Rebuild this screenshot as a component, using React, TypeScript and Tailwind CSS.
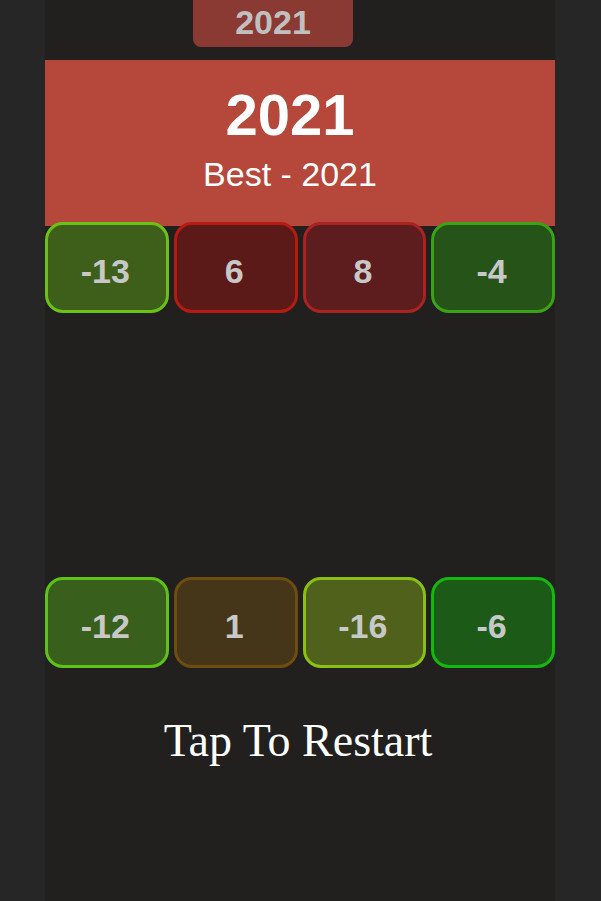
import React from "react";

type Tile = { value: string; bg: string; border: string };

const topRow: Tile[] = [
  { value: "-13", bg: "bg-[#3d5f19]", border: "border-[#6ac313]" },
  { value: "6", bg: "bg-[#5b1a18]", border: "border-[#b81a12]" },
  { value: "8", bg: "bg-[#5d1c1d]", border: "border-[#ab2222]" },
  { value: "-4", bg: "bg-[#255318]", border: "border-[#3aa215]" },
];

const bottomRow: Tile[] = [
  { value: "-12", bg: "bg-[#385f1b]", border: "border-[#5fc216]" },
  { value: "1", bg: "bg-[#453619]", border: "border-[#6f4d0f]" },
  { value: "-16", bg: "bg-[#4f611b]", border: "border-[#8abf13]" },
  { value: "-6", bg: "bg-[#1b5b17]", border: "border-[#15b80e]" },
];

const TileRow: React.FC<{ tiles: Tile[]; className?: string }> = ({ tiles, className }) => (
  <div className={`grid grid-cols-4 gap-[5px] ${className ?? ""}`}>
    {tiles.map((t, i) => (
      <div
        key={i}
        className={`h-[91px] rounded-[18px] border-[3.5px] ${t.bg} ${t.border} flex items-center justify-center pt-[8px] pr-[3px] text-[34px] font-bold text-[#c8c8c8]`}
      >
        {t.value}
      </div>
    ))}
  </div>
);

export default function App() {
  return (
    <div className="min-h-[901px] bg-[#262626] pl-[45px] font-['Liberation_Sans',Arial,sans-serif]">
      <div className="w-[510px] min-h-[901px] bg-[#21201e] flex flex-col">
        {/* Level tab */}
        <div className="ml-[148px] w-[160px] h-[47px] rounded-b-[8px] bg-[#8b3a33] text-center text-[34px] leading-[45px] font-bold text-[#c0c0c0]">
          2021
        </div>

        {/* Score banner */}
        <div className="mt-[13px] h-[166px] bg-[#b5473b] pr-[20px] flex flex-col items-center text-white">
          <div className="mt-[23px] text-[58px] leading-[64px] font-bold">2021</div>
          <div className="mt-[7px] text-[34px] leading-[40px]">Best - 2021</div>
        </div>

        <TileRow tiles={topRow} className="mt-[-4px] relative" />
        <TileRow tiles={bottomRow} className="mt-[264px]" />

        <div className="mt-[48px] pr-[4px] text-center text-[46px] leading-[50px] text-white font-['Liberation_Serif','Times_New_Roman',serif]">
          Tap To Restart
        </div>
      </div>
    </div>
  );
}
